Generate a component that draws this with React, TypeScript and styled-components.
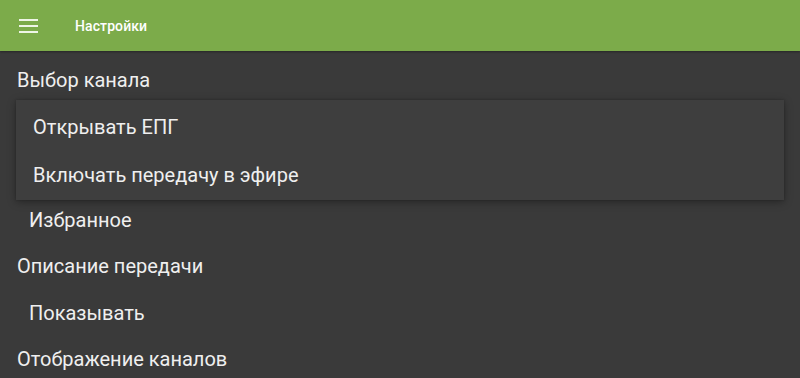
import React from "react";
import styled, { createGlobalStyle } from "styled-components";

const Global = createGlobalStyle`
  html, body { margin: 0; padding: 0; background: #3a3a3a; }
  body { font-family: Roboto, "Noto Sans", sans-serif; }
  #root { width: 800px; height: 378px; overflow: hidden; }
`;

const Page = styled.div`
  position: relative;
  width: 800px;
  height: 378px;
  background: #3a3a3a;
  overflow: hidden;
`;

const AppBar = styled.header`
  height: 51px;
  background: #7cab4a;
  display: flex;
  align-items: center;
  box-shadow: 0 1px 2px rgba(0, 0, 0, 0.35);
  position: relative;
  z-index: 1;
`;

const MenuButton = styled.div`
  width: 19px;
  margin-left: 19px;
  display: flex;
  flex-direction: column;
  gap: 4px;
  span {
    display: block;
    height: 2px;
    background: #eef5e6;
  }
`;

const Title = styled.div`
  margin-left: 37px;
  color: #ffffff;
  font-size: 14px;
  font-weight: 500;
  letter-spacing: 0.1px;
`;

const List = styled.div`
  padding-top: 6px;
  display: flex;
  flex-direction: column;
`;

const Row = styled.div<{ $indent?: boolean }>`
  height: 46.5px;
  display: flex;
  align-items: center;
  padding-left: ${(p) => (p.$indent ? "29px" : "17px")};
  color: #efefef;
  font-size: 20px;
`;

const Popup = styled.div`
  position: absolute;
  left: 16px;
  top: 100px;
  width: 768px;
  height: 100px;
  background: #3e3e3e;
  box-shadow: 0 2px 8px rgba(0, 0, 0, 0.35), 0 0 2px rgba(0, 0, 0, 0.2);
  display: flex;
  flex-direction: column;
  padding-top: 3px;
  box-sizing: border-box;
  z-index: 2;
`;

const PopupItem = styled.div`
  height: 48px;
  display: flex;
  align-items: center;
  padding-left: 17px;
  color: #efefef;
  font-size: 20px;
`;

export default function App() {
  return (
    <Page>
      <Global />
      <AppBar>
        <MenuButton>
          <span />
          <span />
          <span />
        </MenuButton>
        <Title>Настройки</Title>
      </AppBar>
      <List>
        <Row>Выбор канала</Row>
        <Row $indent aria-hidden />
        <Row $indent aria-hidden />
        <Row $indent>Избранное</Row>
        <Row>Описание передачи</Row>
        <Row $indent>Показывать</Row>
        <Row>Отображение каналов</Row>
      </List>
      <Popup>
        <PopupItem>Открывать ЕПГ</PopupItem>
        <PopupItem>Включать передачу в эфире</PopupItem>
      </Popup>
    </Page>
  );
}
